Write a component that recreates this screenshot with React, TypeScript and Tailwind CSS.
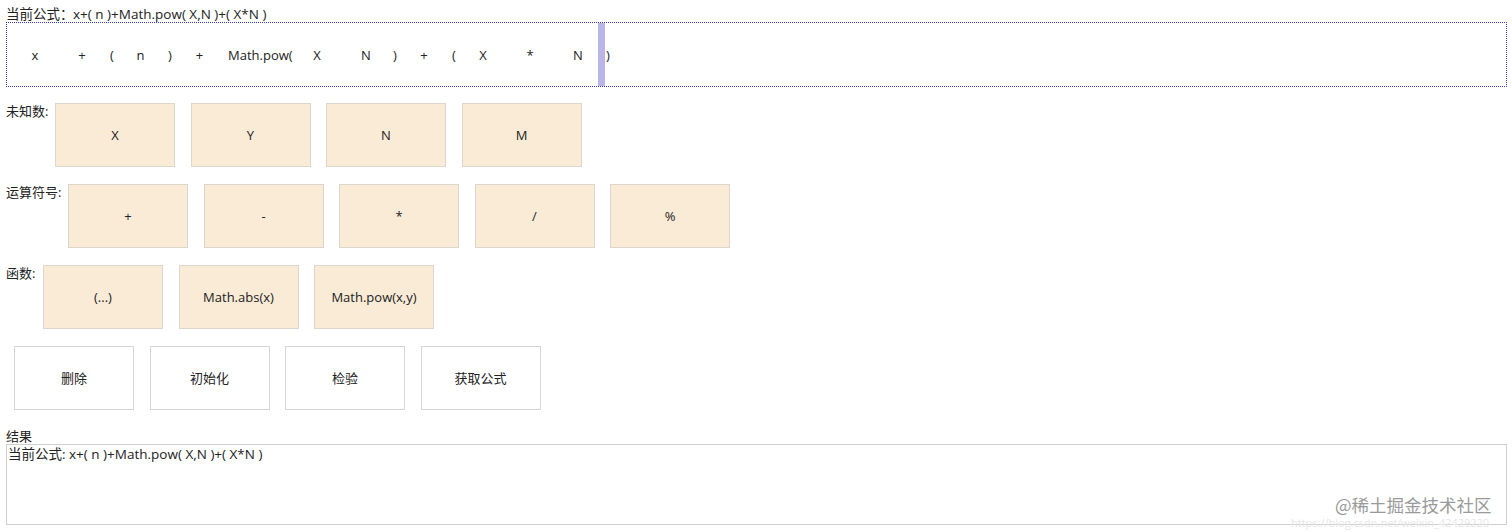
import React from "react";

const font = { fontFamily: '"Open Sans", "Noto Sans CJK SC", sans-serif' };

type Tok = { t: string; ml: string; w: string; left?: boolean };

const tokens: Tok[] = [
  { t: "x", ml: "ml-[14px]", w: "w-[28px]" },
  { t: "+", ml: "ml-[19px]", w: "w-[28px]" },
  { t: "(", ml: "ml-[2px]", w: "w-[28px]" },
  { t: "n", ml: "ml-[0.5px]", w: "w-[28px]" },
  { t: ")", ml: "ml-[1.5px]", w: "w-[28px]" },
  { t: "+", ml: "ml-[1.5px]", w: "w-[28px]" },
  { t: "Math.pow(", ml: "ml-[14.5px]", w: "w-[66px]", left: true },
  { t: "X", ml: "ml-[9px]", w: "w-[28px]" },
  { t: "N", ml: "ml-[21px]", w: "w-[28px]" },
  { t: ")", ml: "ml-[1px]", w: "w-[28px]" },
  { t: "+", ml: "ml-[1px]", w: "w-[28px]" },
  { t: "(", ml: "ml-[2px]", w: "w-[28px]" },
  { t: "X", ml: "ml-[1px]", w: "w-[28px]" },
  { t: "*", ml: "ml-[19px]", w: "w-[28px]" },
  { t: "N", ml: "ml-[20px]", w: "w-[28px]" },
];

function Btn({ label, white }: { label: string; white?: boolean }) {
  return (
    <div
      className={
        "w-[120px] h-[64px] shrink-0 flex items-center justify-center pt-[2px] text-[13px] text-[#222] border " +
        (white ? "bg-white border-[#d6d6d6]" : "bg-[#faebd7] border-[#dcd6cf]")
      }
    >
      {label}
    </div>
  );
}

function Row({ label, lw, items, white }: { label?: string; lw: string; items: string[]; white?: boolean }) {
  return (
    <div className="flex items-start">
      <div className={"shrink-0 text-[13px] leading-[16px] text-[#222] " + lw}>{label}</div>
      <div className="flex gap-[15.5px]">
        {items.map((it, i) => (
          <Btn key={i} label={it} white={white} />
        ))}
      </div>
    </div>
  );
}

export default function App() {
  return (
    <div className="relative w-[1512px] h-[532px] bg-white overflow-hidden text-[#222]" style={font}>
      <div className="pl-[6px] pr-[5px]">
        <div className="pt-[6px] h-[22px] text-[13.5px] leading-[16px] whitespace-pre flex">
          <span className="w-[67px] shrink-0">当前公式：</span>
          <span>{"x+( n )+Math.pow( X,N )+( X*N )"}</span>
        </div>
        <div className="h-[65px] border border-dotted border-[#3a3ad0] flex items-stretch text-[13px]">
          {tokens.map((tk, i) => (
            <div
              key={i}
              className={
                "shrink-0 flex items-center pt-[2px] " + tk.ml + " " + tk.w + " " + (tk.left ? "justify-start" : "justify-center")
              }
            >
              {tk.t}
            </div>
          ))}
          <div className="shrink-0 ml-[6px] w-[7px] bg-[#bab5e8]" />
          <div className="shrink-0 ml-[1px] pt-[2px] flex items-center">)</div>
        </div>

        <div className="mt-[16px] flex flex-col gap-[17px]">
          <Row label="未知数:" lw="w-[49px]" items={["X", "Y", "N", "M"]} />
          <Row label="运算符号:" lw="w-[62px]" items={["+", "-", "*", "/", "%"]} />
          <Row label="函数:" lw="w-[37px]" items={["(...)", "Math.abs(x)", "Math.pow(x,y)"]} />
          <Row lw="w-[8px]" items={["删除", "初始化", "检验", "获取公式"]} white />
        </div>

        <div className="mt-[18px] h-[16px] text-[13px] leading-[16px]">结果</div>
        <div className="h-[81px] border border-[#cfcfcf] px-[1px] pt-[1px] text-[13.5px] leading-[16px] whitespace-pre">
          {"当前公式: x+( n )+Math.pow( X,N )+( X*N )"}
        </div>
      </div>

      <div
        className="absolute left-[1335px] top-[494px] text-[17.5px] leading-[21px] text-[#9a9a9a] whitespace-nowrap"
        style={{ fontFamily: '"Noto Sans CJK SC", sans-serif' }}
      >
        @稀土掘金技术社区
      </div>
      <div className="absolute left-[1291px] top-[516px] text-[11px] leading-[14px] text-[#e6e6e6] whitespace-nowrap">
        https://blog.csdn.net/weixin_42429220
      </div>
    </div>
  );
}
